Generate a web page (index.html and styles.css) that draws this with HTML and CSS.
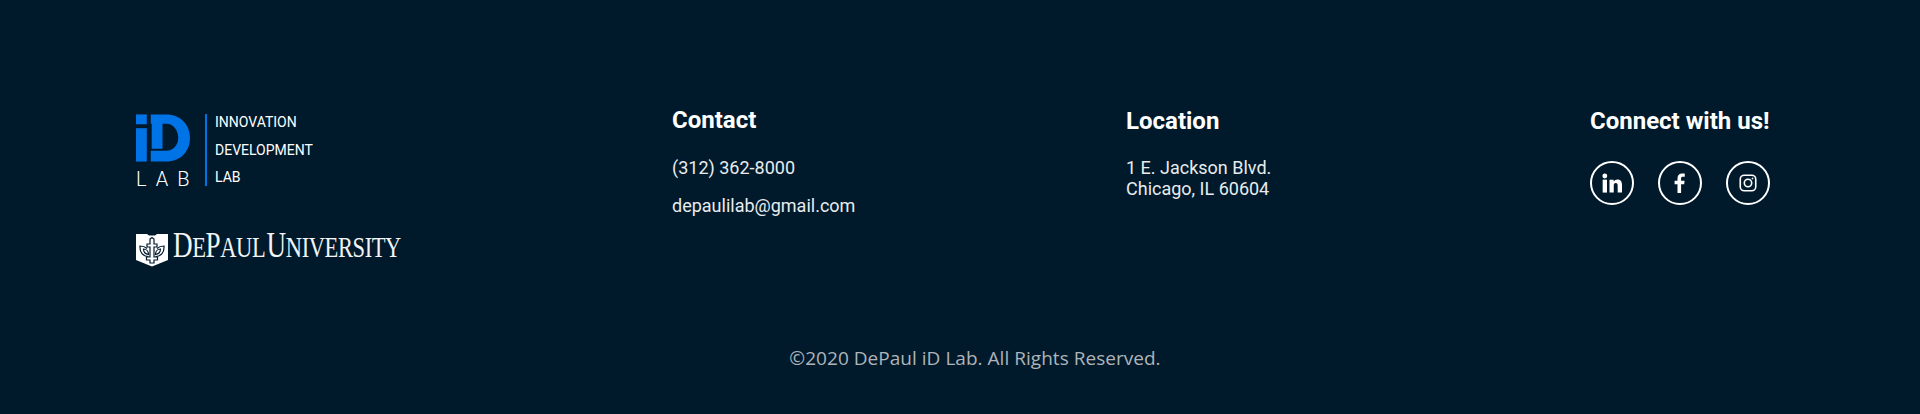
FILE: index.html
```html
<!DOCTYPE html>
<html>
<head>
<link rel="stylesheet" href="styles.css">
</head>
<body>
<footer class="footer">
  <div class="columns">
    <div class="brand">
      <div class="idlab">
        <div class="idlab-mark">
          <svg class="id-logo" width="54" height="48" viewBox="0 0 55 48">
            <rect x="0" y="0" width="11" height="10" fill="#0073e6"/>
            <rect x="0" y="14" width="11" height="34" fill="#0073e6"/>
            <path fill="#0073e6" d="M15 0H31C45 0 55 10 55 24C55 38 45 48 31 48H15V37H31C38 37 43 31 43 24C43 16 38 9.500 31 9.500H27V35H16V9.500H15Z"/>
          </svg>
          <div class="lab-word">LAB</div>
        </div>
        <div class="idlab-names">
          <span>INNOVATION</span>
          <span>DEVELOPMENT</span>
          <span>LAB</span>
        </div>
      </div>
      <div class="depaul">
        <svg class="shield" width="32" height="34" viewBox="0 0 32 34">
          <path fill="#fff" d="M0 1H11L13 2.500H19L21 1H32V27L16 33.500L0 27Z"/>
          <g fill="none" stroke="#001a2c" stroke-width="1.200">
            <path d="M14 6L16 4.500L18 6V11H21V14H18V24H21.500V27H18V30H14V27H10.500V24H14V14H11V11H14Z"/>
            <path d="M12.500 23.500C7 23.500 3.500 19.500 4 13C7 13 9.500 14 11 15.500"/>
            <path d="M19.500 23.500C25 23.500 28.500 19.500 28 13C25 13 22.500 14 21 15.500"/>
            <path d="M12.500 21.500C9 21 7.500 19 7.500 16C10 16 12.500 18 12.500 21.500Z"/>
            <path d="M19.500 21.500C23 21 24.500 19 24.500 16C22 16 19.500 18 19.500 21.500Z"/>
          </g>
        </svg>
        <div class="depaul-name"><span class="cap">D</span>E<span class="cap">P</span>AUL <span class="cap">U</span>NIVERSITY</div>
      </div>
    </div>
    <div class="col col-contact">
      <h3>Contact</h3>
      <p class="phone">(312) 362-8000</p>
      <p>depaulilab@gmail.com</p>
    </div>
    <div class="col col-location">
      <h3>Location</h3>
      <p class="address">1 E. Jackson Blvd.<br>Chicago, IL 60604</p>
    </div>
    <div class="col col-social">
      <h3>Connect with us!</h3>
      <div class="socials">
        <a class="social">
          <svg width="20" height="20" viewBox="0 0 24 24" fill="#fff"><circle cx="3.400" cy="3.600" r="2.900"/><rect x="0.800" y="8" width="5.200" height="15.500"/><path d="M9 8H14V10.200C15 8.700 16.600 7.700 18.600 7.700C22.400 7.700 24 10.200 24 14.200V23.500H18.800V15.300C18.800 13.300 18.200 12 16.500 12C14.800 12 14.100 13.300 14.100 15.300V23.500H9Z"/></svg>
        </a>
        <a class="social">
          <svg width="20" height="20" viewBox="0 0 24 24" fill="#fff"><path d="M9 24V13.500H5.500V9.200H9V6.200C9 2.500 11.200 0.500 14.500 0.500C16 0.500 17.300 0.600 17.700 0.700V4.500H15.400C13.600 4.500 13.300 5.300 13.300 6.600V9.200H17.500L17 13.500H13.300V24Z"/></svg>
        </a>
        <a class="social">
          <svg width="18" height="18" viewBox="0 0 20 20" fill="none" stroke="#fff" stroke-width="1.800"><rect x="1.400" y="1.400" width="17.200" height="17.200" rx="4.500"/><circle cx="10" cy="10" r="4.100"/><circle cx="15" cy="5" r="0.600" fill="#fff" stroke-width="1"/></svg>
        </a>
      </div>
    </div>
  </div>
  <div class="copyright">©2020 DePaul iD Lab. All Rights Reserved.</div>
</footer>
</body>
</html>
```

FILE: styles.css
```css
html, body {
  margin: 0;
  padding: 0;
}
body {
  background-color: #001a2c;
  color: #fff;
  font-family: Roboto, sans-serif;
}
.footer {
  height: 414px;
  box-sizing: border-box;
  padding: 114px 0 0 136px;
}
.columns {
  display: grid;
  grid-template-columns: 536px 454px 464px auto;
  height: 231px;
}

/* logos */
.idlab {
  display: flex;
}
.idlab-mark {
  width: 69px;
  height: 72px;
  border-right: 2px solid #0073e6;
}
.id-logo {
  display: block;
}
.lab-word {
  margin-top: 8px;
  width: 68px;
  font-size: 20px;
  font-weight: 300;
  line-height: 18px;
  letter-spacing: 9px;
}
.idlab-names {
  display: flex;
  flex-direction: column;
  gap: 6.500px;
  margin-left: 8px;
  margin-top: -2px;
  font-size: 14px;
  font-weight: 400;
  line-height: 21px;
}
.depaul {
  display: flex;
  align-items: center;
  gap: 5px;
  margin-top: 41px;
}
.shield {
  display: block;
}
.depaul-name {
  margin-bottom: 6px;
  font-family: "Liberation Serif", serif;
  font-size: 29px;
  line-height: 34px;
  letter-spacing: -0.500px;
  word-spacing: -4px;
  color: #f2f4f5;
  white-space: nowrap;
  transform: scaleX(0.775);
  transform-origin: left center;
}
.cap {
  font-size: 35px;
}

/* columns */
h3 {
  margin: 0;
  font-size: 24px;
  font-weight: 700;
  line-height: 28px;
}
.col p {
  margin: 0;
  font-size: 18px;
  line-height: 21px;
  color: #e8ecee;
}
.col-contact {
  margin-top: -8px;
}
.col-contact .phone {
  margin-top: 23px;
  margin-bottom: 17px;
}
.col-location {
  margin-top: -7px;
}
.col-location .address {
  margin-top: 22px;
}
.col-social {
  margin-top: -7px;
}
.socials {
  display: flex;
  gap: 24px;
  margin-top: 26px;
}
.social {
  display: flex;
  align-items: center;
  justify-content: center;
  width: 44px;
  height: 44px;
  box-sizing: border-box;
  border: 2px solid #fff;
  border-radius: 50%;
}

.copyright {
  margin-left: -106px;
  text-align: center;
  font-family: "Open Sans", sans-serif;
  font-size: 19px;
  line-height: 26px;
  letter-spacing: 0.030px;
  color: #aeb4b8;
}
```
